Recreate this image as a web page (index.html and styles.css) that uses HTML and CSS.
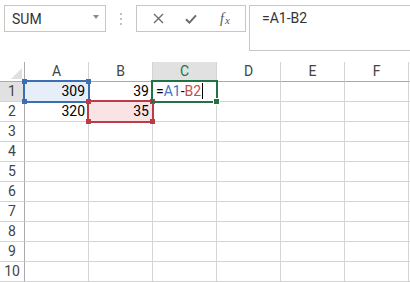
FILE: index.html
```html
<!DOCTYPE html>
<html lang="en">
<head>
  <meta charset="UTF-8">
  <title>Formula</title>
  <link rel="stylesheet" href="styles.css">
</head>
<body>
  <div class="formula-bar">
    <div class="name-box">
      <span>SUM</span>
      <span class="caret"></span>
    </div>
    <div class="grip"><i></i><i></i><i></i></div>
    <div class="buttons">
      <span class="btn btn-cancel">
        <svg width="11" height="11" viewBox="0 0 11 11"><path d="M1 1L10 10M10 1L1 10" stroke="#6d6d6d" stroke-width="1.4"/></svg>
      </span>
      <span class="btn btn-enter">
        <svg width="12" height="10" viewBox="0 0 12 10"><path d="M1 5.2L4.4 8.6L11 1.4" fill="none" stroke="#6d6d6d" stroke-width="2"/></svg>
      </span>
      <span class="btn btn-fx"><i>f</i><i class="x">x</i></span>
    </div>
    <div class="formula-input">=A1-B2</div>
  </div>

  <div class="sheet">
    <div class="corner"><span class="tri"></span></div>
    <div class="col-head">A</div>
    <div class="col-head">B</div>
    <div class="col-head selected">C</div>
    <div class="col-head">D</div>
    <div class="col-head">E</div>
    <div class="col-head">F</div>
    <div class="col-head"></div>

    <div class="row-head selected">1</div>
    <div class="cell num ref-a">309<i class="h tl"></i><i class="h tr"></i><i class="h bl"></i><i class="h br"></i></div>
    <div class="cell num">39</div>
    <div class="cell active">=<span class="r-blue">A1</span>-<span class="r-red">B2</span><span class="cursor"></span></div>
    <div class="cell"></div><div class="cell"></div><div class="cell"></div><div class="cell"></div>

    <div class="row-head">2</div>
    <div class="cell num">320</div>
    <div class="cell num ref-b">35<i class="h tl"></i><i class="h tr"></i><i class="h bl"></i><i class="h br"></i></div>
    <div class="cell"></div><div class="cell"></div><div class="cell"></div><div class="cell"></div><div class="cell"></div>

    <div class="row-head">3</div>
    <div class="cell"></div><div class="cell"></div><div class="cell"></div><div class="cell"></div><div class="cell"></div><div class="cell"></div><div class="cell"></div>
    <div class="row-head">4</div>
    <div class="cell"></div><div class="cell"></div><div class="cell"></div><div class="cell"></div><div class="cell"></div><div class="cell"></div><div class="cell"></div>
    <div class="row-head">5</div>
    <div class="cell"></div><div class="cell"></div><div class="cell"></div><div class="cell"></div><div class="cell"></div><div class="cell"></div><div class="cell"></div>
    <div class="row-head">6</div>
    <div class="cell"></div><div class="cell"></div><div class="cell"></div><div class="cell"></div><div class="cell"></div><div class="cell"></div><div class="cell"></div>
    <div class="row-head">7</div>
    <div class="cell"></div><div class="cell"></div><div class="cell"></div><div class="cell"></div><div class="cell"></div><div class="cell"></div><div class="cell"></div>
    <div class="row-head">8</div>
    <div class="cell"></div><div class="cell"></div><div class="cell"></div><div class="cell"></div><div class="cell"></div><div class="cell"></div><div class="cell"></div>
    <div class="row-head">9</div>
    <div class="cell"></div><div class="cell"></div><div class="cell"></div><div class="cell"></div><div class="cell"></div><div class="cell"></div><div class="cell"></div>
    <div class="row-head">10</div>
    <div class="cell"></div><div class="cell"></div><div class="cell"></div><div class="cell"></div><div class="cell"></div><div class="cell"></div><div class="cell"></div>
  </div>
</body>
</html>
```

FILE: styles.css
```css
body {
  margin: 0;
  width: 410px;
  height: 282px;
  overflow: hidden;
  background: #fff;
  font-family: 'Roboto', 'Liberation Sans', sans-serif;
  color: #222;
}

.formula-bar {
  display: flex;
  align-items: flex-start;
  height: 62px;
  padding: 5px 0 0 4px;
  box-sizing: border-box;
  overflow: hidden;
}

.name-box {
  width: 102px;
  height: 27px;
  box-sizing: border-box;
  border: 1px solid #c6c6c6;
  display: flex;
  align-items: center;
  justify-content: space-between;
  padding: 0 6px 0 7px;
  font-size: 14px;
  color: #333;
}

.caret {
  width: 0;
  height: 0;
  border-left: 3.5px solid transparent;
  border-right: 3.5px solid transparent;
  border-top: 4px solid #8a8a8a;
  margin-bottom: 3px;
}

.grip {
  width: 30px;
  height: 27px;
  display: flex;
  flex-direction: column;
  align-items: center;
  justify-content: center;
  gap: 3px;
}

.grip i {
  width: 2px;
  height: 2px;
  background: #c2c2c2;
}

.buttons {
  width: 110px;
  height: 27px;
  box-sizing: border-box;
  border: 1px solid #c6c6c6;
  display: flex;
  align-items: center;
  padding-left: 14px;
}

.btn {
  display: flex;
  align-items: center;
  justify-content: center;
}

.btn-cancel { width: 14px; }
.btn-enter { width: 14px; margin-left: 19px; }

.btn-fx {
  margin-left: 22px;
  font-family: 'Liberation Serif', serif;
  font-size: 14px;
  color: #555;
}

.btn-fx .x {
  font-size: 11px;
  margin-left: 1px;
  margin-top: 2px;
}

.formula-input {
  margin-left: 3px;
  flex: 1;
  height: 46px;
  box-sizing: border-box;
  border: 1px solid #c6c6c6;
  border-right: none;
  padding: 4px 0 0 12px;
  font-size: 14px;
  color: #333;
}

.sheet {
  display: grid;
  grid-template-columns: 25px repeat(6, 64px) 1fr;
  grid-auto-rows: 20px;
  width: 410px;
  overflow: hidden;
  font-size: 14px;
}

.corner,
.col-head,
.row-head,
.cell {
  box-sizing: border-box;
  border-right: 1px solid #d4d4d4;
  border-bottom: 1px solid #d4d4d4;
}

.corner {
  position: relative;
  border-right-color: #ababab;
  border-bottom-color: #ababab;
}

.tri {
  position: absolute;
  right: 2px;
  bottom: 2px;
  width: 0;
  height: 0;
  border-left: 11px solid transparent;
  border-bottom: 11px solid #dfdfdf;
}

.col-head {
  border-bottom-color: #ababab;
  text-align: center;
  line-height: 19px;
  color: #444;
}

.col-head.selected {
  background: #e1e1e1;
  color: #217346;
}

.row-head {
  border-right-color: #ababab;
  text-align: center;
  line-height: 19px;
  color: #444;
}

.row-head.selected {
  background: #e1e1e1;
}

.cell {
  position: relative;
  line-height: 19px;
  padding: 0 3px;
  color: #000;
}

.num {
  text-align: right;
}

.ref-a {
  background: #e6eefa;
}

.ref-a::after,
.ref-b::after,
.active::after {
  content: "";
  position: absolute;
  left: -2px;
  top: -2px;
  right: -2px;
  bottom: -2px;
  border: 2px solid;
  z-index: 1;
}

.ref-a::after { border-color: #3c6eb4; }

.ref-b {
  background: #f9e3e4;
}

.ref-b::after { border-color: #bb3b47; }

.h {
  position: absolute;
  width: 5px;
  height: 5px;
  z-index: 2;
}

.ref-a .h { background: #3c6eb4; }
.ref-b .h { background: #bb3b47; z-index: 3; }

.h.tl { left: -3px; top: -3px; }
.h.tr { right: -3px; top: -3px; }
.h.bl { left: -3px; bottom: -3px; }
.h.br { right: -3px; bottom: -3px; }

.active::after {
  border-color: #217346;
  z-index: 4;
}

.active::before {
  content: "";
  position: absolute;
  right: -4px;
  bottom: -4px;
  width: 5px;
  height: 5px;
  background: #217346;
  border: 1px solid #fff;
  z-index: 5;
}

.r-blue { color: #4472c4; }
.r-red { color: #c0504d; }

.cursor {
  display: inline-block;
  width: 1px;
  height: 16px;
  background: #000;
  vertical-align: -3px;
  margin-left: 1px;
}
```
